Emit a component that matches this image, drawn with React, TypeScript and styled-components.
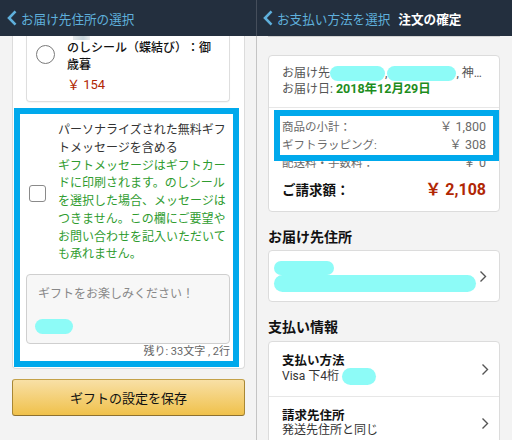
import * as React from 'react'
import styled, { createGlobalStyle } from 'styled-components'

const GlobalStyle = createGlobalStyle`
  html, body {
    margin: 0;
    padding: 0;
    background: #f3f3f3;
    font-family: Roboto, "Noto Sans CJK JP", sans-serif;
    text-spacing-trim: space-all;
    -webkit-font-smoothing: antialiased;
  }
`
const Screen = styled.div`
  display: flex;
  width: 512px;
  height: 440px;
  overflow: hidden;
  background: #f3f3f3;
`
const Panel = styled.div<{ $width: number }>`
  display: flex;
  flex-direction: column;
  width: ${props => props.$width}px;
  flex-shrink: 0;
`
const Divider = styled.div`
  width: 1px;
  flex-shrink: 0;
  background: linear-gradient(#454e5b 0 36px, #c4c4c4 36px);
`
const Header = styled.div<{ $pad: number }>`
  display: flex;
  align-items: center;
  height: 36px;
  padding-left: ${props => props.$pad}px;
  background: #232f3e;
  flex-shrink: 0;
  white-space: nowrap;
`
const BackLink = styled.span`
  display: flex;
  align-items: center;
  gap: 4px;
  color: #5fb0dc;
  font-size: 12.6px;
`
const HeaderTitle = styled.span`
  margin-left: 8px;
  color: #fff;
  font-size: 12.6px;
  font-weight: 700;
`
const LeftBody = styled.div`
  flex: 1;
  padding: 0 11px 0 12px;
`
const Sheet = styled.div`
  background: #fff;
  border: 1px solid #dcdcdc;
  border-top: none;
  border-radius: 0 0 4px 4px;
  padding-bottom: 1px;
`
const OptionCard = styled.div`
  margin: 0 14px 0 13px;
  padding: 0 0 8px 9px;
  border: 1px solid #dedede;
  border-top: none;
  border-radius: 0 0 4px 4px;
  box-shadow: 0 1px 1px rgba(0, 0, 0, 0.04);
`
const ImageStub = styled.div`
  width: 17px;
  height: 4px;
  margin-left: 37px;
  background: linear-gradient(90deg, #e4e8ea, #c9d6dc 60%, #e9ecee);
`
const OptionRow = styled.div`
  display: flex;
  align-items: flex-start;
  gap: 12px;
`
const Radio = styled.span`
  width: 17px;
  height: 17px;
  margin-top: 5px;
  border: 1px solid #7a7a7a;
  border-radius: 50%;
  flex-shrink: 0;
`
const OptionText = styled.div`
  font-size: 12px;
  line-height: 17px;
  font-weight: 500;
  color: #111;
  white-space: nowrap;
`
const Price = styled.div<{ $size?: number }>`
  color: #b12704;
  font-size: ${props => props.$size || 13}px;
`
const GiftBox = styled.div`
  margin: 6px 5px 0 1px;
  padding: 8px 3px 2px 6px;
  border: 6px solid #00a9ec;
`
const CheckRow = styled.div`
  display: flex;
  align-items: center;
  gap: 12px;
  padding-left: 3px;
`
const CheckBox = styled.span`
  width: 15px;
  height: 15px;
  border: 1px solid #8a8a8a;
  border-radius: 3px;
  flex-shrink: 0;
`
const GiftText = styled.div`
  width: 172px;
  font-size: 12px;
  line-height: 17.75px;
  color: #333;
`
const Note = styled.span`
  color: #2f9c2f;
`
const MessageBox = styled.div`
  height: 70px;
  box-sizing: border-box;
  margin-top: 10px;
  padding: 12px 11px 0;
  background: #f7f7f7;
  border: 1px solid #cfcfcf;
  border-radius: 4px;
`
const Placeholder = styled.div`
  font-size: 12px;
  line-height: 14px;
  color: #888;
`
const Blob = styled.span<{ $w: number; $h: number }>`
  display: inline-block;
  width: ${props => props.$w}px;
  height: ${props => props.$h}px;
  border-radius: ${props => props.$h / 2}px;
  background: #8dfbf7;
  vertical-align: middle;
`
const MessageBlob = styled(Blob)`
  display: block;
  margin: 18px 0 0 -3px;
`
const Counter = styled.div`
  text-align: right;
  font-size: 11px;
  line-height: 15px;
  color: #666;
`
const SaveButton = styled.div`
  display: flex;
  align-items: center;
  justify-content: center;
  height: 35px;
  margin-top: 10px;
  border: 1px solid #a88734;
  border-color: #c4a24a #a88734 #8d7030;
  border-radius: 3px;
  background: linear-gradient(#f8e0a6, #f0c14b);
  font-size: 13px;
  color: #111;
`
const RightBody = styled.div`
  flex: 1;
  padding: 0 12px 0 11px;
`
const ScrollEdge = styled.div`
  height: 1px;
  background: #d2d2d2;
`
const Card = styled.div<{ $top: number }>`
  margin-top: ${props => props.$top}px;
  background: #fff;
  border: 1px solid #dcdcdc;
  border-radius: 4px;
`
const DeliveryInfo = styled.div`
  padding: 9px 13px 10px;
  border-bottom: 1px solid #e7e7e7;
  font-size: 12px;
  line-height: 16px;
  color: #555;
  white-space: nowrap;
  overflow: hidden;
`
const DateText = styled.span`
  color: #1d8d1d;
  font-weight: 700;
  font-size: 12.5px;
`
const Summary = styled.div`
  padding: 10px 13px 10px;
`
const Highlight = styled.div`
  position: relative;
  &::after {
    content: '';
    position: absolute;
    top: -8px;
    bottom: -7px;
    left: -8px;
    right: -13px;
    border: 6px solid #00a9ec;
    pointer-events: none;
  }
`
const SumRow = styled.div`
  display: flex;
  justify-content: space-between;
  line-height: 18px;
  font-size: 11.5px;
  color: #6a6a6a;
`
const SumAmount = styled.span`
  font-size: 12.5px;
`
const TotalRow = styled.div`
  display: flex;
  justify-content: space-between;
  align-items: center;
  margin-top: 7px;
  line-height: 22px;
  font-size: 13.5px;
  font-weight: 700;
  color: #111;
`
const Heading = styled.div<{ $after: number }>`
  margin: 15px 0 ${props => props.$after}px;
  font-size: 14px;
  line-height: 20px;
  font-weight: 700;
  color: #111;
`
const AddressCard = styled(Card)`
  display: flex;
  align-items: center;
  justify-content: space-between;
  height: 50px;
  padding: 0 12px 0 5px;
`
const BlobStack = styled.div`
  display: flex;
  flex-direction: column;
`
const LinkRow = styled.div<{ $last?: boolean }>`
  display: flex;
  align-items: center;
  justify-content: space-between;
  padding: 12px 10px 11px 13px;
  border-bottom: ${props => (props.$last ? 'none' : '1px solid #e7e7e7')};
`
const RowTitle = styled.div`
  font-size: 12.5px;
  line-height: 14px;
  font-weight: 700;
  color: #111;
`
const RowSub = styled.div`
  font-size: 12px;
  line-height: 14px;
  color: #333;
  white-space: nowrap;
`

const BackChevron = () => (
  <svg width="10" height="16" viewBox="0 0 10 16">
    <polyline points="8.5,1.3 2,8 8.5,14.7" fill="none" stroke="#5fb0dc" strokeWidth="2.6" />
  </svg>
)
const RowChevron = () => (
  <svg width="8" height="13" viewBox="0 0 8 13">
    <polyline points="1.5,1.5 6.5,6.5 1.5,11.5" fill="none" stroke="#555" strokeWidth="1.4" />
  </svg>
)

export default function App() {
  return (
    <Screen>
      <GlobalStyle />
      <Panel $width={256}>
        <Header $pad={7}>
          <BackLink><BackChevron />お届け先住所の選択</BackLink>
        </Header>
        <LeftBody>
          <Sheet>
            <OptionCard>
              <ImageStub />
              <OptionRow>
                <Radio />
                <div>
                  <OptionText>のしシール（蝶結び）：御<br />歳暮</OptionText>
                  <Price>￥ 154</Price>
                </div>
              </OptionRow>
            </OptionCard>
            <GiftBox>
              <CheckRow>
                <CheckBox />
                <GiftText>
                  パーソナライズされた無料ギフトメッセージを含める<br />
                  <Note>ギフトメッセージはギフトカードに印刷されます。のしシールを選択した場合、メッセージはつきません。この欄にご要望やお問い合わせを記入いただいても承れません。</Note>
                </GiftText>
              </CheckRow>
              <MessageBox>
                <Placeholder>ギフトをお楽しみください！</Placeholder>
                <MessageBlob $w={38} $h={15} />
              </MessageBox>
              <Counter>残り: 33文字 , 2行</Counter>
            </GiftBox>
          </Sheet>
          <SaveButton>ギフトの設定を保存</SaveButton>
        </LeftBody>
      </Panel>
      <Divider />
      <Panel $width={255}>
        <Header $pad={6}>
          <BackLink><BackChevron />お支払い方法を選択</BackLink>
          <HeaderTitle>注文の確定</HeaderTitle>
        </Header>
        <RightBody>
          <ScrollEdge />
          <Card $top={18}>
            <DeliveryInfo>
              <div>お届け先<Blob $w={55} $h={15} />,<Blob $w={69} $h={15} />, 神…</div>
              <div>お届け日: <DateText>2018年12月29日</DateText></div>
            </DeliveryInfo>
            <Summary>
              <Highlight>
                <SumRow><span>商品の小計：</span><SumAmount>￥ 1,800</SumAmount></SumRow>
                <SumRow><span>ギフトラッピング:</span><SumAmount>￥ 308</SumAmount></SumRow>
              </Highlight>
              <SumRow><span>配送料・手数料：</span><SumAmount>￥ 0</SumAmount></SumRow>
              <TotalRow><span>ご請求額：</span><Price $size={16} style={{ fontWeight: 700 }}>￥ 2,108</Price></TotalRow>
            </Summary>
          </Card>
          <Heading $after={3}>お届け先住所</Heading>
          <AddressCard $top={0}>
            <BlobStack>
              <Blob $w={60} $h={14} />
              <Blob $w={202} $h={17} />
            </BlobStack>
            <RowChevron />
          </AddressCard>
          <Heading $after={4}>支払い情報</Heading>
          <Card $top={0}>
            <LinkRow>
              <div>
                <RowTitle>支払い方法</RowTitle>
                <RowSub>Visa 下4桁 <Blob $w={34} $h={17} /></RowSub>
              </div>
              <RowChevron />
            </LinkRow>
            <LinkRow $last>
              <div>
                <RowTitle>請求先住所</RowTitle>
                <RowSub>発送先住所と同じ</RowSub>
              </div>
              <RowChevron />
            </LinkRow>
          </Card>
        </RightBody>
      </Panel>
    </Screen>
  )
}
